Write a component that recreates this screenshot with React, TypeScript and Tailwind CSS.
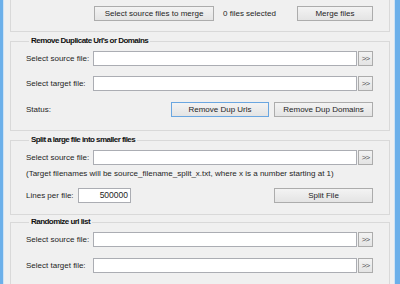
import React from 'react'

type BtnProps = {
  children: React.ReactNode
  className?: string
  focused?: boolean
}

const Btn = ({ children, className = '', focused }: BtnProps) => (
  <button
    type="button"
    className={`h-[15px] shrink-0 border ${focused ? 'border-[#6aa6e0]' : 'border-[#acacac]'} bg-linear-to-b from-[#f3f3f3] to-[#e4e4e4] text-[8px] leading-none text-[#1e1e1e] ${className}`}
  >
    {children}
  </button>
)

const TextBox = ({ className = '', value }: { className?: string; value?: string }) => (
  <div className={`h-[15px] shrink-0 border border-[#abadb3] bg-white px-[2px] text-right text-[8.5px] leading-[13px] text-[#1e1e1e] ${className}`}>
    {value}
  </div>
)

const FileRow = ({ label, className = '' }: { label: string; className?: string }) => (
  <div className={`flex h-[15px] items-center ${className}`}>
    <span className="w-[67px] shrink-0 text-[8px] leading-none">{label}</span>
    <TextBox className="w-[264px]" />
    <Btn className="ml-[1px] w-[15px] text-[6px] tracking-[-0.8px] text-[#555]">&gt;&gt;</Btn>
  </div>
)

const Group = ({ title, children, className = '' }: { title: string; children: React.ReactNode; className?: string }) => (
  <fieldset className={`w-[380px] border border-[#d9d9d9] pl-[15px] pr-[16px] ${className}`}>
    <legend className="ml-[3px] px-[2px] text-[8px] font-bold leading-[12px] tracking-[-0.55px] text-[#111]">{title}</legend>
    {children}
  </fieldset>
)

export default function App() {
  return (
    <div className="flex h-[284px] w-[400px] overflow-hidden bg-[#f0f0f0] font-['Liberation_Sans',Arial,sans-serif] text-[#1e1e1e]">
      <div className="w-[3px] shrink-0 bg-[#6cb0ea]" />
      <div className="w-[1px] shrink-0 bg-[#cfe3f5]" />

      <div className="flex-1 pl-[6px]">
        {/* merge group, top cut off */}
        <div className="flex h-[32px] w-[380px] items-start border-x border-b border-[#d9d9d9] pr-[16px] pt-[6px]">
          <Btn className="ml-[83px] w-[120px]">Select source files to merge</Btn>
          <span className="ml-[9px] mt-[3px] text-[8px] leading-[10px]">0 files selected</span>
          <Btn className="ml-auto w-[76px]">Merge files</Btn>
        </div>

        <Group title="Remove Duplicate Url's or Domains" className="mt-[3px] pb-[13px] pt-[4px]">
          <FileRow label="Select source file:" />
          <FileRow label="Select target file:" className="mt-[10px]" />
          <div className="mt-[11px] flex h-[15px] items-center">
            <span className="w-[67px] shrink-0 text-[8px] leading-none">Status:</span>
            <Btn focused className="ml-[78px] w-[98px]">Remove Dup Urls</Btn>
            <Btn className="ml-[5px] w-[99px]">Remove Dup Domains</Btn>
          </div>
        </Group>

        <Group title="Split a large file into smaller files" className="mt-[3px] pb-[11px] pt-[4px]">
          <FileRow label="Select source file:" />
          <p className="mt-[3px] whitespace-nowrap text-[8px] leading-[12px]">
            (Target filenames will be source_filename_split_x.txt, where x is a number starting at 1)
          </p>
          <div className="mt-[8px] flex h-[15px] items-center">
            <span className="w-[52px] shrink-0 text-[8px] leading-none">Lines per file:</span>
            <TextBox className="w-[53px]" value="500000" />
            <Btn className="ml-auto w-[99px]">Split File</Btn>
          </div>
        </Group>

        <Group title="Randomize url list" className="mt-[1px] pb-[20px] pt-[4px]">
          <FileRow label="Select source file:" />
          <FileRow label="Select target file:" className="mt-[11px]" />
        </Group>
      </div>

      <div className="w-[1px] shrink-0 bg-[#cfe3f5]" />
      <div className="w-[5px] shrink-0 bg-[#6cb0ea]" />
    </div>
  )
}
